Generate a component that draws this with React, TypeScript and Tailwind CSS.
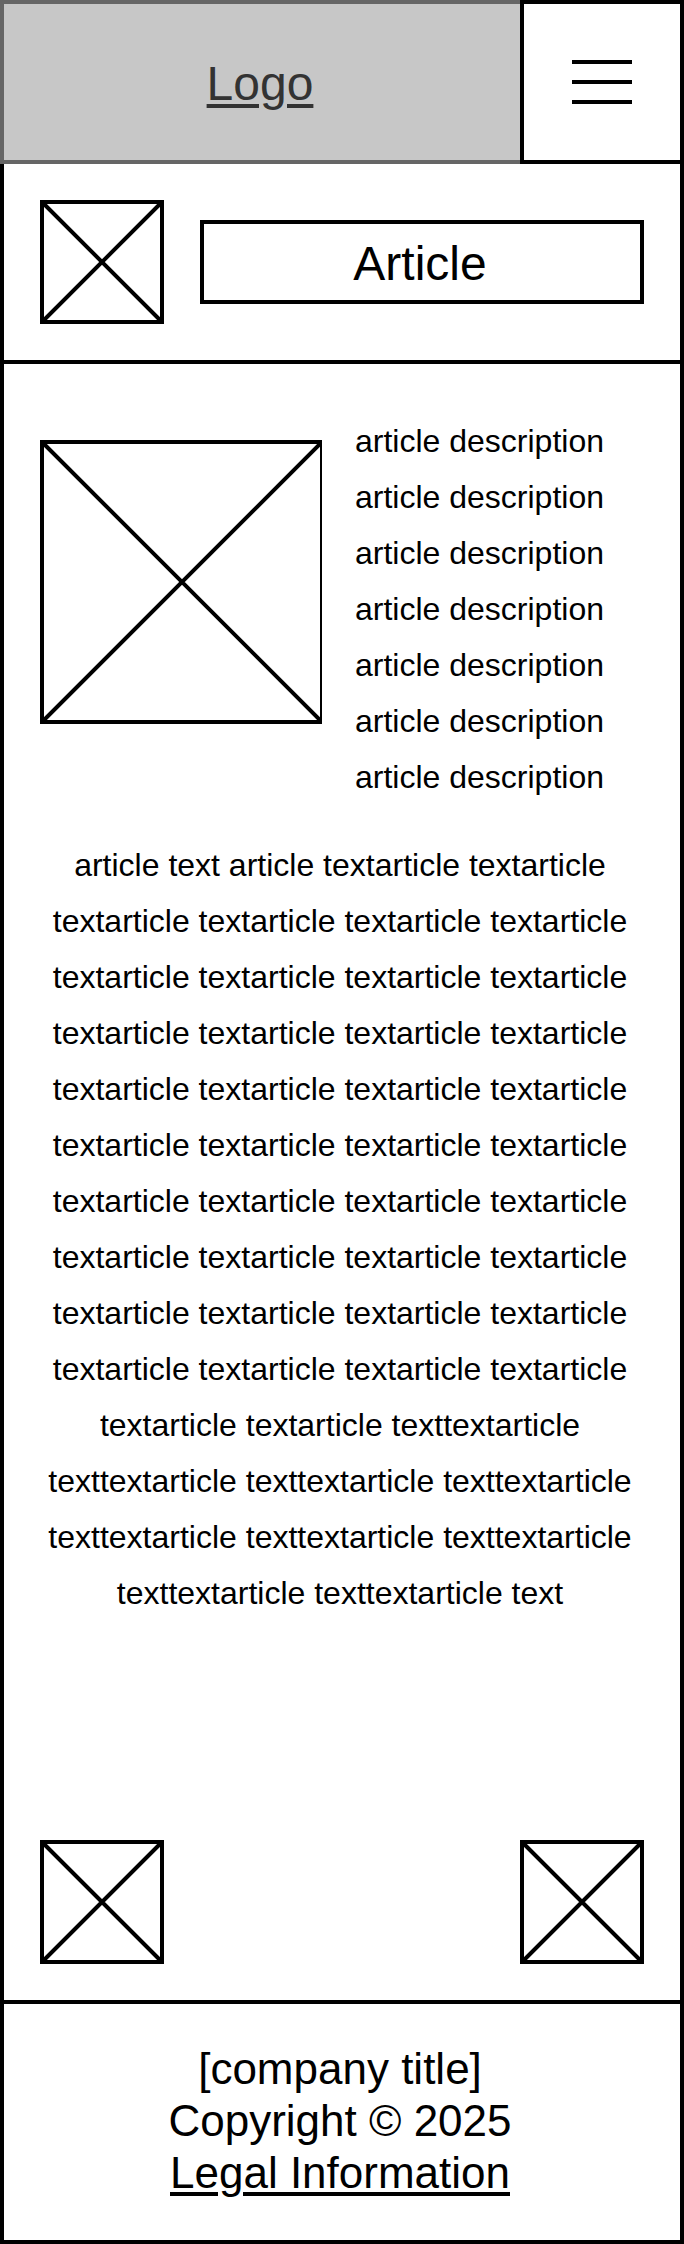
const description = Array.from({ length: 7 }, () => "article description");

const articleText = [
  "article text article textarticle textarticle",
  ...Array.from({ length: 38 }, () => "textarticle"),
  ...Array.from({ length: 9 }, () => "texttextarticle"),
  "text",
].join(" ");

function Placeholder({ size }: { size: number }) {
  const far = size - 2;
  return (
    <svg
      className="block shrink-0"
      width={size}
      height={size}
      viewBox={`0 0 ${size} ${size}`}
      fill="none"
      stroke="black"
      strokeWidth="4"
      aria-hidden="true"
    >
      <rect x="2" y="2" width={size - 4} height={size - 4} />
      <path d={`M2 2L${far} ${far}M${far} 2L2 ${far}`} />
    </svg>
  );
}

function Header() {
  return (
    <header className="flex">
      <a
        href="#home"
        className="flex h-[164px] flex-1 items-center justify-center border-4 border-r-0 border-[#666666] bg-[#c7c7c7] pt-1 pr-1 text-[48px] leading-[56px] text-[#333333] underline decoration-4 underline-offset-4"
      >
        Logo
      </a>
      <button
        type="button"
        aria-label="Menu"
        className="flex size-[164px] shrink-0 flex-col items-center justify-center gap-4 border-4 border-black bg-white"
      >
        <span className="h-1 w-[60px] bg-black" />
        <span className="h-1 w-[60px] bg-black" />
        <span className="h-1 w-[60px] bg-black" />
      </button>
    </header>
  );
}

function TitleBar() {
  return (
    <div className="flex items-center gap-9 border-b-4 border-black p-9">
      <button type="button" aria-label="Back" className="shrink-0">
        <Placeholder size={124} />
      </button>
      <h1 className="flex h-[84px] flex-1 items-center justify-center border-4 border-black pt-1 pr-1 text-[48px] leading-[56px]">
        Article
      </h1>
    </div>
  );
}

function Article() {
  return (
    <article className="pt-[49px] pr-10 pl-9 text-[32px] leading-[56px]">
      <div className="flex gap-[33px]">
        <div className="mt-[27px] w-[282px] shrink-0 self-start overflow-hidden">
          <Placeholder size={284} />
        </div>
        <div className="min-w-0 flex-1">
          {description.map((line, i) => (
            <p key={i}>{line}</p>
          ))}
        </div>
      </div>
      <p className="mt-8 text-center">{articleText}</p>
    </article>
  );
}

export default function App() {
  return (
    <div className="bg-white font-['Liberation_Sans',Arial,sans-serif] text-black">
      <Header />
      <div className="border-4 border-t-0 border-black">
        <TitleBar />
        <main>
          <Article />
          <nav
            aria-label="Article navigation"
            className="mt-[219px] flex justify-between border-b-4 border-black px-9 pb-9"
          >
            <button type="button" aria-label="Previous article">
              <Placeholder size={124} />
            </button>
            <button type="button" aria-label="Next article">
              <Placeholder size={124} />
            </button>
          </nav>
        </main>
        <footer className="pt-[39px] pr-10 pb-[41px] pl-9 text-center text-[44px] leading-[52px]">
          <p>[company title]</p>
          <p>Copyright © 2025</p>
          <p>
            <a href="#legal" className="underline decoration-4 underline-offset-4">
              Legal Information
            </a>
          </p>
        </footer>
      </div>
    </div>
  );
}
